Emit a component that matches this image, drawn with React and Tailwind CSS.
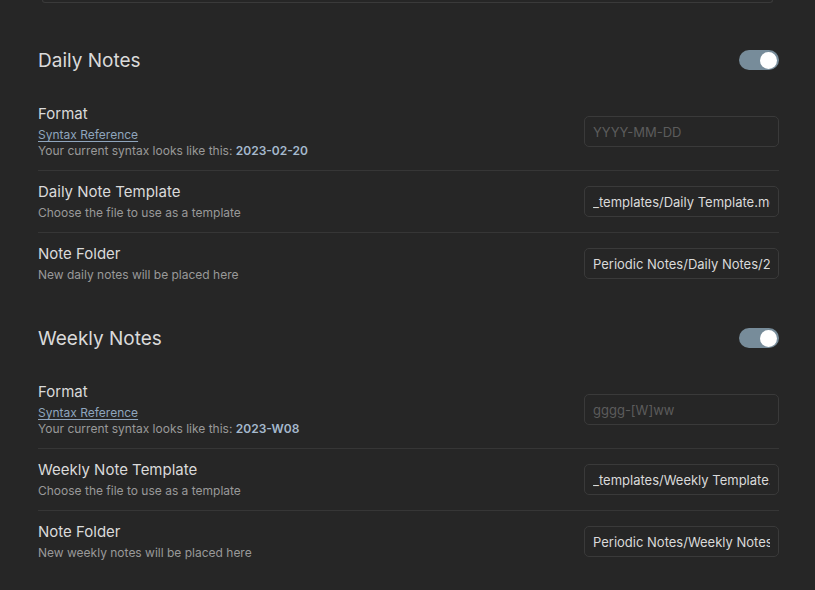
import React from "react";

function Toggle() {
  return (
    <div className="flex h-[20px] w-[40px] items-center justify-end rounded-full bg-[#778c9a] px-[2px]">
      <div className="h-[17px] w-[17px] rounded-full bg-white" />
    </div>
  );
}

function TextInput({ value, placeholder }) {
  return (
    <input
      readOnly
      value={value || ""}
      placeholder={placeholder}
      className="h-[31px] w-[195px] shrink-0 rounded-[5px] border border-[#3a3a3a] bg-[#262626] px-[8px] text-[13px] text-[#dadada] placeholder-[#5c5c5c] outline-none"
    />
  );
}

function Setting({ title, children, value, placeholder, first }) {
  return (
    <div
      className={`flex items-center justify-between gap-4 pb-[11px] ${
        first ? "pt-[12px]" : "border-t border-[#363636] pt-[11px]"
      }`}
    >
      <div className="flex flex-col">
        <div className="text-[15px] leading-[20px] text-[#dadada]">{title}</div>
        <div className="mt-[3px] text-[12px] leading-[16px] text-[#999999]">{children}</div>
      </div>
      <TextInput value={value} placeholder={placeholder} />
    </div>
  );
}

function FormatDesc({ sample }) {
  return (
    <>
      <a className="block text-[#8fa5bd] underline underline-offset-[2px]">Syntax Reference</a>
      <span className="block">
        Your current syntax looks like this:{" "}
        <b className="font-semibold text-[#a5b9cd]">{sample}</b>
      </span>
    </>
  );
}

function Section({ name, children }) {
  return (
    <div className="pt-[31px]">
      <div className="mb-[19px] flex h-[26px] items-center justify-between">
        <h2 className="pt-[1px] text-[19px] leading-[26px] text-[#dadada]">{name}</h2>
        <Toggle />
      </div>
      {children}
    </div>
  );
}

export default function App() {
  return (
    <div
      className="h-[590px] w-full overflow-hidden bg-[#262626]"
      style={{ fontFamily: "Inter, 'Noto Sans', sans-serif" }}
    >
      <div className="mx-[42px] h-[3px] rounded-b-[6px] border-x border-b border-[#3a3a3a]" />
      <div className="ml-[38px] mr-[36px] mt-[13px]">
        <Section name="Daily Notes">
          <Setting first title="Format" placeholder="YYYY-MM-DD">
            <FormatDesc sample="2023-02-20" />
          </Setting>
          <Setting title="Daily Note Template" value="_templates/Daily Template.md">
            Choose the file to use as a template
          </Setting>
          <Setting title="Note Folder" value="Periodic Notes/Daily Notes/2023">
            New daily notes will be placed here
          </Setting>
        </Section>
        <Section name="Weekly Notes">
          <Setting first title="Format" placeholder="gggg-[W]ww">
            <FormatDesc sample="2023-W08" />
          </Setting>
          <Setting title="Weekly Note Template" value="_templates/Weekly Template.md">
            Choose the file to use as a template
          </Setting>
          <Setting title="Note Folder" value="Periodic Notes/Weekly Notes/2023">
            New weekly notes will be placed here
          </Setting>
        </Section>
      </div>
    </div>
  );
}
